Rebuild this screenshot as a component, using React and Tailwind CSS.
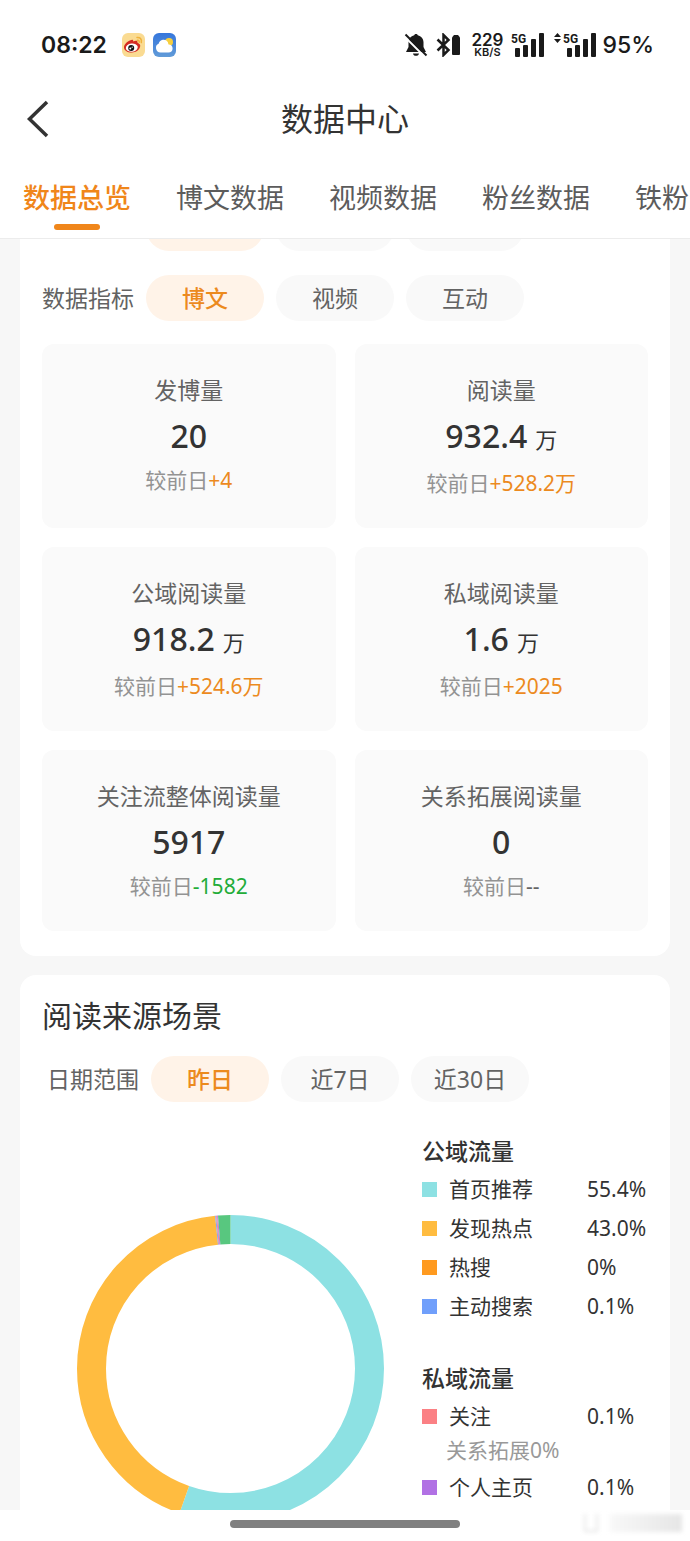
import React, { useState } from 'react';
import clsx from 'clsx';

const tabs = ['数据总览', '博文数据', '视频数据', '粉丝数据', '铁粉数据'];

const stats = [
    { label: '发博量', value: '20', delta: '+4', trend: 'up' },
    { label: '阅读量', value: '932.4', unit: '万', delta: '+528.2万', trend: 'up' },
    { label: '公域阅读量', value: '918.2', unit: '万', delta: '+524.6万', trend: 'up' },
    { label: '私域阅读量', value: '1.6', unit: '万', delta: '+2025', trend: 'up' },
    { label: '关注流整体阅读量', value: '5917', delta: '-1582', trend: 'down' },
    { label: '关系拓展阅读量', value: '0', delta: '--', trend: 'flat' },
];

const trendColors = {
    up: 'text-[#ec8a1e]',
    down: 'text-[#22ac38]',
    flat: 'text-[#636363]',
};

const sources = [
    {
        title: '公域流量',
        items: [
            { name: '首页推荐', value: '55.4%', color: 'bg-[#8de1e3]' },
            { name: '发现热点', value: '43.0%', color: 'bg-[#ffbc40]' },
            { name: '热搜', value: '0%', color: 'bg-[#ff9a1f]' },
            { name: '主动搜索', value: '0.1%', color: 'bg-[#709ffb]' },
        ],
    },
    {
        title: '私域流量',
        items: [
            { name: '关注', value: '0.1%', color: 'bg-[#fb8084]', note: '关系拓展0%' },
            { name: '个人主页', value: '0.1%', color: 'bg-[#b171e4]' },
        ],
    },
];

const slices = [
    { share: 55.4, color: '#8de1e3' },
    { share: 43.0, color: '#ffbc40' },
    { share: 0.1, color: '#709ffb' },
    { share: 0.1, color: '#fb8084' },
    { share: 0.1, color: '#b171e4' },
    { share: 1.3, color: '#58c77f' },
];

export default function App() {
    const [tab, setTab] = useState(tabs[0]);
    const [period, setPeriod] = useState('昨日');
    const [metric, setMetric] = useState('博文');
    const [range, setRange] = useState('昨日');

    return (
        <div className="flex h-screen flex-col overflow-hidden bg-[#f7f7f7] font-['Noto_Sans','Noto_Sans_CJK_SC',sans-serif] text-[#333]">
            <header className="shrink-0 border-b border-[#ececec] bg-white">
                <StatusBar />
                <div className="grid h-[58px] grid-cols-[1fr_auto_1fr] items-center px-[26px]">
                    <button type="button" aria-label="返回" className="justify-self-start">
                        <svg width="24" height="40" viewBox="0 0 24 40" fill="none" stroke="#333" strokeWidth="3.500">
                            <path d="M21 3 3.500 20 21 37" />
                        </svg>
                    </button>
                    <h1 className="text-[32px] leading-10">数据中心</h1>
                </div>
                <nav className="flex gap-[45px] overflow-hidden pt-8 pb-2 pl-[23px]">
                    {tabs.map((name) => (
                        <button
                            key={name}
                            type="button"
                            onClick={() => setTab(name)}
                            className={clsx(
                                'flex shrink-0 flex-col items-center gap-2 text-[27px] leading-9',
                                tab === name ? 'font-medium text-[#f0861a]' : 'text-[#5c5c5c]'
                            )}
                        >
                            {name}
                            <span className={clsx('h-[6px] w-[46px] rounded-full', tab === name && 'bg-[#f0861a]')} />
                        </button>
                    ))}
                </nav>
            </header>

            <main className="min-h-0 flex-1 overflow-hidden px-5">
                {/* Scrolled so that the period filter is mostly under the header */}
                <section className="-mt-[34px] rounded-b-2xl bg-white px-[22px] pb-[25px]">
                    <Filter label="日期范围" options={['昨日', '近7日', '近30日']} value={period} onChange={setPeriod} raised />
                    <div className="mt-6">
                        <Filter label="数据指标" options={['博文', '视频', '互动']} value={metric} onChange={setMetric} />
                    </div>
                    <div className="mt-[23px] grid grid-cols-2 gap-[19px]">
                        {stats.map((item) => (
                            <StatCard key={item.label} {...item} />
                        ))}
                    </div>
                </section>

                <section className="mt-[19px] rounded-2xl bg-white px-[22px] pt-[22px] pb-8">
                    <h2 className="text-[30px] leading-[38px]">阅读来源场景</h2>
                    <div className="mt-[21px] pl-[5px]">
                        <Filter label="日期范围" options={['昨日', '近7日', '近30日']} value={range} onChange={setRange} />
                    </div>
                    <div className="mt-[30px] flex items-start justify-between">
                        <div className="mt-[83px] ml-[35px]">
                            <Donut />
                        </div>
                        <Legend />
                    </div>
                </section>
            </main>

            <footer className="relative flex h-[31px] shrink-0 justify-center bg-white pt-[10px]">
                <div className="h-2 w-[230px] rounded-full bg-[#808080]" />
                <div className="absolute top-1 right-2 flex gap-3 blur-[2px]" aria-hidden="true">
                    <span className="h-[18px] w-[14px] border-2 border-t-0 border-[#e6e6e6]" />
                    <span className="h-[18px] w-[72px] bg-gradient-to-r from-[#f8f8f8] to-[#e6e6e6]" />
                </div>
            </footer>
        </div>
    );
}

function Filter({ label, options, value, onChange, raised }) {
    return (
        <div className="flex items-center gap-3 text-[23px] text-[#636363]">
            <span className={clsx('shrink-0', raised && 'pb-2')}>{label}</span>
            {options.map((option) => (
                <button
                    key={option}
                    type="button"
                    onClick={() => onChange(option)}
                    className={clsx(
                        'h-[46px] w-[118px] rounded-full',
                        raised && 'pb-1',
                        value === option ? 'bg-[#fff3e8] font-medium text-[#ec8a1e]' : 'bg-[#f9f9f9]'
                    )}
                >
                    {option}
                </button>
            ))}
        </div>
    );
}

function StatCard({ label, value, unit, delta, trend }) {
    return (
        <div className="rounded-xl bg-[#fafafa] pt-[30px] pb-[31px] text-center">
            <p className="text-[23px] leading-8 text-[#636363]">{label}</p>
            <p className="mt-[10px] flex items-baseline justify-center gap-2 text-[32px] leading-10 font-medium">
                {value}
                {unit && <span className="text-[22px] font-normal">{unit}</span>}
            </p>
            <p className="mt-[10px] text-[21px] leading-7 text-[#939393]">
                较前日<span className={trendColors[trend]}>{delta}</span>
            </p>
        </div>
    );
}

function Donut() {
    let offset = 0;
    return (
        <svg width="307" height="307" viewBox="0 0 307 307" fill="none" role="img" aria-label="阅读来源占比">
            <g transform="rotate(-90 153.5 153.5)">
                {slices.map((slice) => {
                    const start = offset;
                    offset += slice.share;
                    return (
                        <circle
                            key={slice.color}
                            cx="153.5"
                            cy="153.5"
                            r="139"
                            stroke={slice.color}
                            strokeWidth="29"
                            pathLength="100"
                            strokeDasharray={`${slice.share} ${100 - slice.share}`}
                            strokeDashoffset={-start}
                        />
                    );
                })}
            </g>
        </svg>
    );
}

function Legend() {
    return (
        <div className="flex w-[226px] flex-col gap-[33px] text-[21px]">
            {sources.map((group) => (
                <div key={group.title}>
                    <h3 className="text-[23px] leading-[38px] font-medium">{group.title}</h3>
                    <ul>
                        {group.items.map((item) => (
                            <li key={item.name}>
                                <div className="flex items-center leading-[39px]">
                                    <span className={clsx('size-[15px]', item.color)} />
                                    <span className="ml-3 flex-1">{item.name}</span>
                                    <span className="w-[61px] whitespace-nowrap">{item.value}</span>
                                </div>
                                {item.note && <p className="mb-1 pl-6 leading-7 text-[#999]">{item.note}</p>}
                            </li>
                        ))}
                    </ul>
                </div>
            ))}
        </div>
    );
}

function StatusBar() {
    return (
        <div className="flex h-[90px] items-center justify-between pr-9 pl-[41px] text-[#1a1a1a]">
            <div className="flex items-center">
                <span className="font-['Inter',sans-serif] text-[23px] font-semibold">08:22</span>
                <WeiboIcon />
                <WeatherIcon />
            </div>
            <div className="flex items-center">
                <svg width="24" height="24" viewBox="0 0 24 24">
                    <path
                        fill="#1a1a1a"
                        d="M12 1c1 0 1.700.6 1.800 1.300 3.400.8 5.700 3.500 5.700 7V14l2.500 5H2l2.500-5V9.300c0-3.500 2.300-6.200 5.700-7C10.300 1.600 11 1 12 1zM9 20.500h6c-.2 1.400-1.400 2.300-3 2.300s-2.800-.9-3-2.300z"
                    />
                    <path stroke="#fff" strokeWidth="2" d="M1 4 21 24" />
                    <path stroke="#1a1a1a" strokeWidth="2" d="M1.500 1.500 22.500 22.500" />
                </svg>
                <svg className="ml-2" width="24" height="24" viewBox="0 0 24 24" fill="none" stroke="#1a1a1a" strokeWidth="2.500">
                    <path d="m1.500 6.500 11 10.500-5 5V2l5 5-11 10.500" />
                    <path fill="#1a1a1a" stroke="none" d="M16 4.500 18 2h4l2 2.500V21a1 1 0 0 1-1 1h-6a1 1 0 0 1-1-1z" />
                </svg>
                <div className="ml-[11px] flex flex-col items-center font-['Inter',sans-serif] font-semibold">
                    <span className="text-[17px] leading-[14px]">229</span>
                    <span className="text-[11px] leading-[11px]">KB/S</span>
                </div>
                <Signal />
                <svg className="ml-[9px]" width="7" height="24" viewBox="0 0 7 24" fill="#1a1a1a">
                    <path d="M3.500 0 7 4H0zM0 6h7l-3.500 4z" />
                </svg>
                <Signal tight />
                <span className="ml-[5px] font-['Inter',sans-serif] text-[23px] font-medium">95%</span>
            </div>
        </div>
    );
}

function Signal({ tight }) {
    return (
        <svg className={tight ? 'ml-[2px]' : 'ml-2'} width="34" height="24" viewBox="0 0 34 24" fill="#1a1a1a">
            <text x="0" y="10" fontSize="12" fontWeight="700" fontFamily="Roboto, sans-serif">5G</text>
            <rect x="4" y="15" width="5" height="9" rx="1" />
            <rect x="12" y="12" width="5" height="12" rx="1" />
            <rect x="20" y="6" width="5" height="18" rx="1" />
            <rect x="28" y="0" width="5" height="24" rx="1" />
        </svg>
    );
}

function WeiboIcon() {
    return (
        <svg className="ml-[15px]" width="23" height="24" viewBox="0 0 23 24" fill="none">
            <rect width="23" height="24" rx="6" fill="#fadb92" />
            <path d="M15 4.500c3-.5 5 1.800 4.300 5M15.500 7.300c1.200-.2 2 .7 1.700 2" stroke="#f0b23c" strokeWidth="1.500" strokeLinecap="round" />
            <path
                fill="#d42a20"
                d="M8.500 7.200c1.500-1 3-.6 2.800 1.200 2.200-1.100 4.700-1 4.200 1.300 2 .7 3 2 2.700 3.600-.5 3.700-4.200 6.200-8.500 6.200-4.500 0-7.700-2.100-7.700-5.300 0-2.700 3-5.800 6.500-7z"
            />
            <ellipse cx="9.800" cy="14.600" rx="6" ry="4.100" fill="#fff" transform="rotate(-8 9.800 14.600)" />
            <circle cx="9.200" cy="15" r="3" fill="#111" />
            <circle cx="8.300" cy="15.600" r="1" fill="#fff" />
            <circle cx="10.200" cy="14.200" r=".6" fill="#fff" />
        </svg>
    );
}

function WeatherIcon() {
    return (
        <svg className="ml-2" width="23" height="24" viewBox="0 0 23 24">
            <defs>
                <linearGradient id="sky" x1="0" y1="0" x2="0" y2="1">
                    <stop offset="0" stopColor="#3576dc" />
                    <stop offset="1" stopColor="#619bd8" />
                </linearGradient>
            </defs>
            <rect width="23" height="24" rx="6" fill="url(#sky)" />
            <circle cx="16" cy="9" r="4" fill="#f7cf3f" />
            <path fill="#fff" d="M7.500 19.500a4.700 4.700 0 0 1-1.700-9 5 5 0 0 1 9-1.500c.3 1 .5 2 .8 2.500 2.300 0 4 1.600 4 4s-1.700 4-4 4z" />
        </svg>
    );
}
